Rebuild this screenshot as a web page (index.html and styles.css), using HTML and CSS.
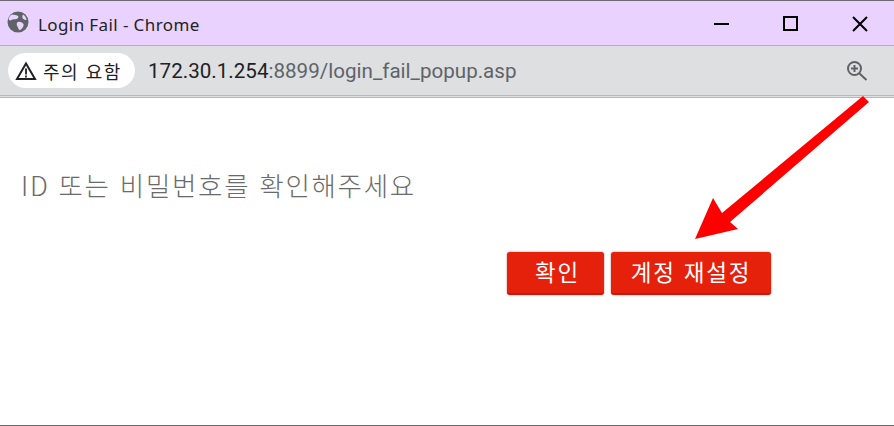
FILE: index.html
```html
<!DOCTYPE html>
<html lang="ko">
<head>
    <meta charset="UTF-8">
    <meta name="viewport" content="width=device-width, initial-scale=1.0">
    <title>Login Fail - Chrome</title>
    <link rel="stylesheet" href="styles.css">
</head>
<body>
    <div class="window">
        <div class="titlebar">
            <svg class="globe" width="22" height="22" viewBox="0 0 22 22">
                <circle cx="11" cy="11" r="10.5" fill="#5f6368"/>
                <path d="M5 3.5c2 .5 4 .2 6 1.5 1 1 0 2.5-1.500 3C8 8.500 6 7.500 4.500 9 3 10 2 9 1.500 8 2 6 3 4.500 5 3.500zM11 11c2-.5 4 .5 5.500 2 .5 1.500-.5 3-1.500 4.500-1 1-2 1.500-3 1.500-.5-2-1.500-3-2-4.500-.5-1.500-.5-3 1-3.500zM16 3.500c2 1 3.500 3.500 3.500 5.500-1.500 0-3-.5-4-2-.5-1.500 0-2.500.5-3.500z" fill="#e9d3fe"/>
            </svg>
            <span class="title">Login Fail - Chrome</span>
            <div class="controls">
                <svg width="16" height="16" viewBox="0 0 16 16"><path d="M0 8h15" stroke="#000" stroke-width="2"/></svg>
                <svg width="16" height="16" viewBox="0 0 16 16"><rect x="1" y="1" width="13" height="13" fill="none" stroke="#000" stroke-width="2"/></svg>
                <svg width="16" height="16" viewBox="0 0 16 16"><path d="M1 1l14 14M15 1L1 15" stroke="#000" stroke-width="2"/></svg>
            </div>
        </div>

        <div class="addressbar">
            <div class="badge">
                <svg width="22" height="20" viewBox="0 0 22 20">
                    <path d="M11 2.500L20 18H2z" fill="none" stroke="#202124" stroke-width="2"/>
                    <path d="M11 7.500v6M11 14.500v2" stroke="#202124" stroke-width="1.800"/>
                </svg>
                <span>주의 요함</span>
            </div>
            <div class="url"><span class="host">172.30.1.254</span>:8899/login_fail_popup.asp</div>
            <svg class="zoom" width="24" height="24" viewBox="0 0 24 24">
                <circle cx="9.500" cy="9.500" r="6.500" fill="none" stroke="#5f6368" stroke-width="2"/>
                <path d="M6 9.500h7M9.500 6v7M14.500 14.500l7 6.500" stroke="#5f6368" stroke-width="2"/>
            </svg>
        </div>

        <div class="content">
            <p class="message">ID 또는 비밀번호를 확인해주세요</p>
            <div class="buttons">
                <button class="btn btn-ok">확인</button>
                <button class="btn btn-reset">계정 재설정</button>
            </div>
        </div>

        <svg class="arrow" width="894" height="426" viewBox="0 0 894 426">
            <path d="M869 102L863 96 722 213 713 198 695 239 738 229 730 222z" fill="#fe0000"/>
        </svg>
    </div>
</body>
</html>
```

FILE: styles.css
```css
* {
    box-sizing: border-box;
}

body {
    margin: 0;
    background: #fff;
    font-family: "Noto Sans CJK KR", "Noto Sans", sans-serif;
}

.window {
    position: relative;
    width: 894px;
    height: 426px;
    display: flex;
    flex-direction: column;
    border-bottom: 1px solid #6a6a6a;
    overflow: hidden;
}

.titlebar {
    height: 46px;
    display: flex;
    align-items: center;
    padding: 2px 26px 0 7px;
    background: #e9d3fe;
    border-top: 1px solid #6c6a70;
    border-bottom: 1px solid #b4b2b8;
}

.globe {
    margin-top: -4px;
}

.title {
    margin-left: 9px;
    font-family: "Noto Sans", sans-serif;
    font-size: 17px;
    letter-spacing: 0.4px;
    color: #222;
}

.controls {
    margin-left: auto;
    display: flex;
    gap: 53px;
}

.addressbar {
    height: 52px;
    display: flex;
    align-items: center;
    padding: 0 25px 0 8px;
    background: #dedfe1;
    border-bottom: 3px double #b9b9bb;
}

.badge {
    width: 127px;
    height: 35px;
    display: flex;
    align-items: center;
    gap: 6px;
    padding-left: 7px;
    background: #fff;
    border-radius: 18px;
    font-size: 18px;
    letter-spacing: 1.5px;
    color: #202124;
}

.url {
    margin-left: 13px;
    font-family: "Roboto", sans-serif;
    font-size: 20.600px;
    color: #5f6368;
}

.host {
    color: #202124;
}

.zoom {
    margin-left: auto;
}

.content {
    flex: 1;
    display: flex;
    flex-direction: column;
    padding: 72px 123px 0 21px;
}

.message {
    margin: 0;
    font-size: 26.500px;
    font-weight: 300;
    letter-spacing: 1.7px;
    line-height: 30px;
    color: #6a6a6a;
}

.buttons {
    display: flex;
    justify-content: flex-end;
    gap: 7px;
    margin-top: 52px;
}

.btn {
    height: 43px;
    padding: 0 0 3px;
    border: none;
    border-bottom: 2px solid #b9200f;
    border-radius: 3px;
    background: #e6210b;
    box-shadow: 0 0 2px rgba(120, 20, 10, 0.6);
    font-family: inherit;
    font-size: 22.500px;
    letter-spacing: 1.8px;
    color: #fff;
    cursor: pointer;
}

.btn-ok {
    width: 97px;
    padding-left: 4px;
}

.btn-reset {
    width: 160px;
}

.arrow {
    position: absolute;
    top: 0;
    left: 0;
    pointer-events: none;
}
```
